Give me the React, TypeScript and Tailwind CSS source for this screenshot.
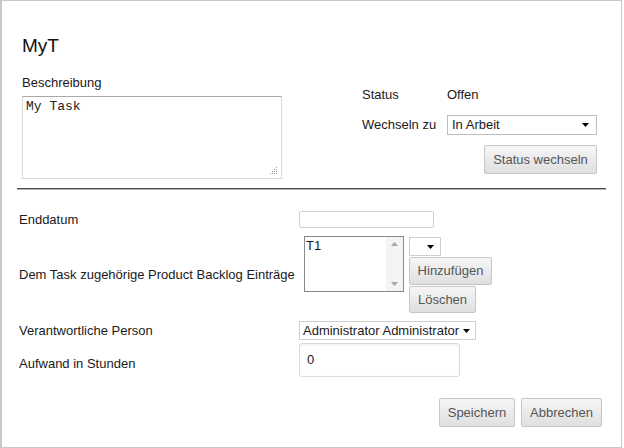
import React from "react";

const Arrow = () => (
  <svg width="7" height="4" viewBox="0 0 7 4" className="block">
    <path d="M0 0h7L3.5 4z" fill="#000" />
  </svg>
);

const btn =
  "flex items-center justify-center border border-[#c6c6c6] rounded-[2px] bg-gradient-to-b from-[#f6f6f6] to-[#dfdfdf] text-[#555] text-[13px] leading-4";

export default function App() {
  return (
    <div className="w-[624px] h-[448px] bg-white font-['Liberation_Sans',Arial,sans-serif] text-[#1a1a1a]">
      <div className="w-[622px] h-[448px] border-t border-r border-b border-l-2 border-[#c8c8c8] flex flex-col">
        {/* top section */}
        <div className="pt-[33px] pl-[20px]">
          <div className="text-[19px] leading-[24px] text-[#111]">MyT</div>
          <div className="flex">
            <div className="w-[260px] mt-[17px]">
              <div className="text-[13px] leading-4">Beschreibung</div>
              <div className="relative mt-[5px] w-[260px] h-[83px] border border-[#dadada] border-t-[#a9a9a9] pt-[2px] pl-[3px] font-['Liberation_Mono','Courier_New',monospace] text-[13px] leading-4 text-[#222]">
                My Task
                <svg width="8" height="8" viewBox="0 0 8 8" className="absolute right-[3px] bottom-[3px]">
                  <rect x="6" y="0" width="1" height="1" fill="#999" />
                  <rect x="4" y="2" width="1" height="1" fill="#999" />
                  <rect x="6" y="2" width="1" height="1" fill="#999" />
                  <rect x="2" y="4" width="1" height="1" fill="#999" />
                  <rect x="4" y="4" width="1" height="1" fill="#999" />
                  <rect x="6" y="4" width="1" height="1" fill="#999" />
                  <rect x="0" y="6" width="1" height="1" fill="#999" />
                  <rect x="2" y="6" width="1" height="1" fill="#999" />
                  <rect x="4" y="6" width="1" height="1" fill="#999" />
                  <rect x="6" y="6" width="1" height="1" fill="#999" />
                </svg>
              </div>
            </div>
            <div className="ml-[80px] mt-[29px] w-[235px] flex flex-col text-[13px] leading-4">
              <div className="flex h-4">
                <div className="w-[85px]">Status</div>
                <div>Offen</div>
              </div>
              <div className="flex items-center mt-[12px] h-[20px]">
                <div className="w-[85px]">Wechseln zu</div>
                <div className="w-[150px] h-[20px] border border-[#bdbdbd] flex items-center justify-between pl-[4px] pr-[7px]">
                  <span>In Arbeit</span>
                  <Arrow />
                </div>
              </div>
              <div className={`${btn} self-end mt-[10px] w-[113px] h-[29px]`}>Status wechseln</div>
            </div>
          </div>
        </div>

        {/* divider */}
        <div className="ml-[15px] mt-[9px] w-[589px] h-[2px] border-t border-[#4a4a4a] border-b border-b-[#b5b5b5]" />

        {/* lower section */}
        <div className="pl-[17px] text-[13px] leading-4">
          <div className="flex items-center mt-[21px] h-[17px]">
            <div className="w-[280px]">Enddatum</div>
            <div className="w-[135px] h-[17px] border border-[#cfcfcf] rounded-[2px]" />
          </div>

          <div className="flex items-center mt-[8px]">
            <div className="w-[280px]">Dem Task zugehörige Product Backlog Einträge</div>
            <div className="flex ml-[5px]">
              <div className="flex w-[100px] h-[56px] border border-[#8a8a8a]">
                <div className="flex-1 pt-[1px] pl-[1px]">T1</div>
                <div className="w-[17px] bg-[#f4f4f4] flex flex-col items-center justify-between py-[5px]">
                  <svg width="7" height="4" viewBox="0 0 7 4" className="block">
                    <path d="M0 4h7L3.5 0z" fill="#a6a6a6" />
                  </svg>
                  <svg width="7" height="4" viewBox="0 0 7 4" className="block">
                    <path d="M0 0h7L3.5 4z" fill="#a6a6a6" />
                  </svg>
                </div>
              </div>
              <div className="flex flex-col ml-[5px]">
                <div className="mt-px w-[32px] h-[19px] border border-[#cfcfcf] flex items-center justify-end pr-[6px]">
                  <Arrow />
                </div>
                <div className={`${btn} mt-px w-[83px] h-[28px]`}>Hinzufügen</div>
                <div className={`${btn} mt-px w-[67px] h-[27px]`}>Löschen</div>
              </div>
            </div>
          </div>

          <div className="flex items-center mt-[8px] h-[19px]">
            <div className="w-[280px]">Verantwortliche Person</div>
            <div className="w-[177px] h-[19px] border border-[#cfcfcf] flex items-center justify-between pl-[3px] pr-[5px]">
              <span>Administrator Administrator</span>
              <Arrow />
            </div>
          </div>

          <div className="flex items-start mt-[3px]">
            <div className="w-[280px] pt-[13px]">Aufwand in Stunden</div>
            <div className="w-[161px] h-[34px] border border-[#dcdcdc] rounded-[3px] shadow-[inset_0_1px_2px_rgba(0,0,0,0.08)] flex items-center pl-[7px]">
              0
            </div>
          </div>
        </div>

        <div className="flex justify-end gap-[6px] mt-[21px] pr-[19px]">
          <div className={`${btn} w-[76px] h-[29px]`}>Speichern</div>
          <div className={`${btn} w-[81px] h-[29px]`}>Abbrechen</div>
        </div>
      </div>
    </div>
  );
}
